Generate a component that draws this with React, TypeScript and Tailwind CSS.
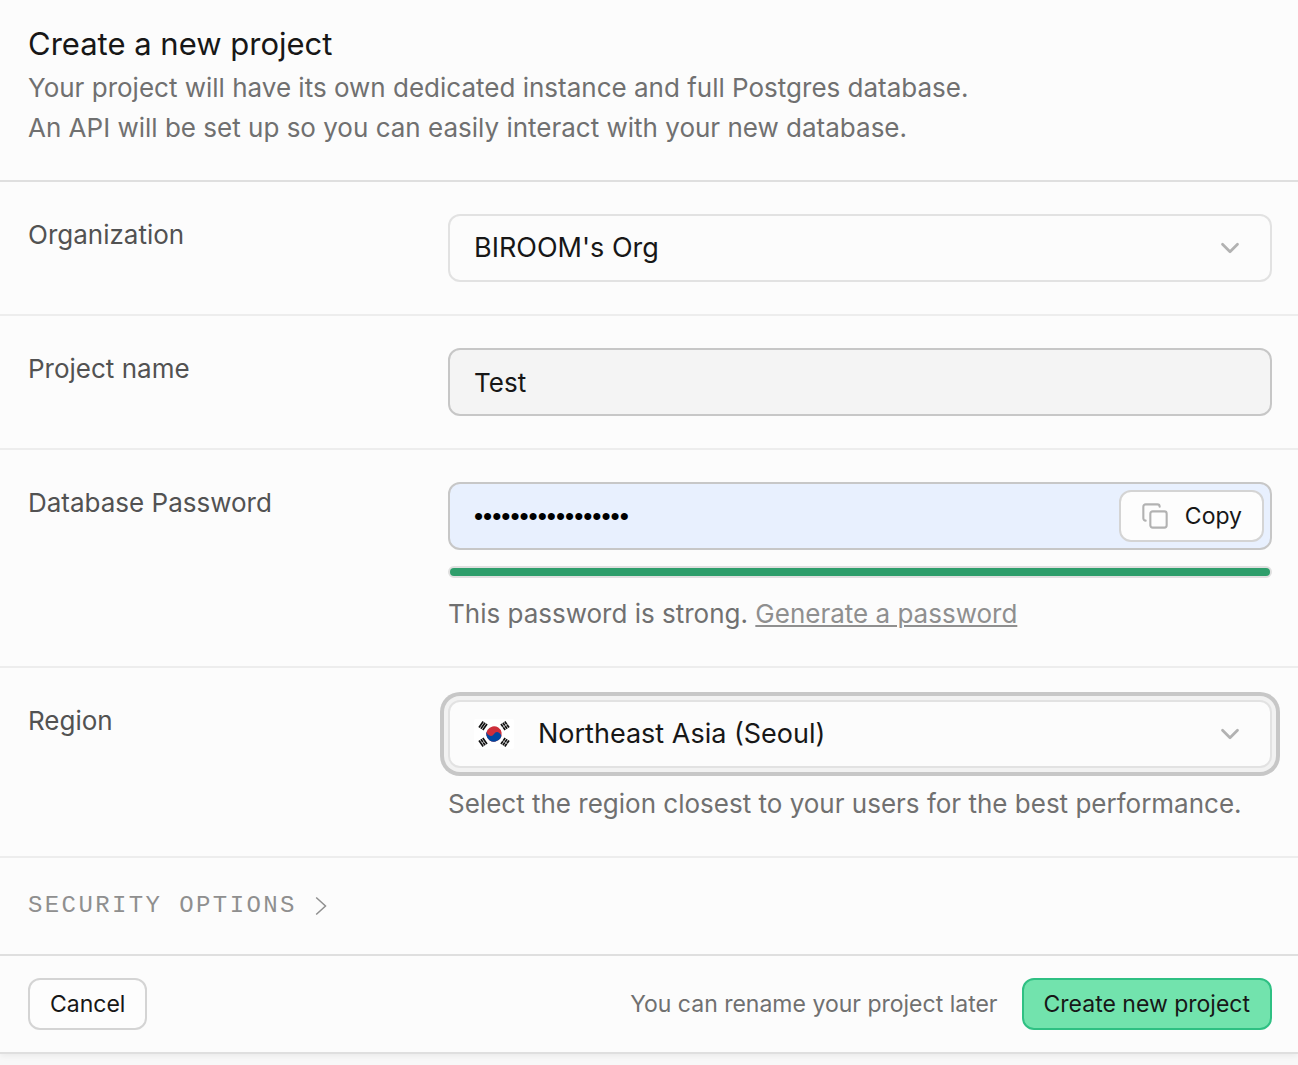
import type { ReactNode } from "react";
import { ChevronDown, Copy } from "lucide-react";

const selectClass =
  "block h-[68px] w-full appearance-none rounded-xl border-2 border-[#e2e2e2] bg-[#fcfcfc] pr-16 text-[27px] text-[#171717] outline-none";

function Row({ label, htmlFor, children }: { label: string; htmlFor: string; children: ReactNode }) {
  return (
    <div className="grid grid-cols-3 gap-4 border-b-2 border-[#ededed] py-8 pr-[26px] pl-7">
      <label htmlFor={htmlFor} className="text-[26px] leading-[42px] text-[#525252]">
        {label}
      </label>
      <div className="col-span-2 flex flex-col gap-4">{children}</div>
    </div>
  );
}

function SelectChevron() {
  return (
    <ChevronDown
      size={30}
      strokeWidth={2.2}
      className="pointer-events-none absolute top-1/2 right-[27px] -translate-y-1/2 text-[#b2b2b2]"
    />
  );
}

function KoreaFlag() {
  return (
    <svg viewBox="0 0 40 30" className="pointer-events-none absolute top-1/2 left-[26px] h-[30px] w-10 -translate-y-1/2">
      <rect width="40" height="30" rx="2" fill="#fff" />
      <g transform="rotate(33.7 20 15)">
        <circle cx="20" cy="15" r="7.7" fill="#cd2e3a" />
        <path d="M12.3 15a3.85 3.85 0 0 0 7.7 0a3.85 3.85 0 0 1 7.7 0a7.7 7.7 0 0 1-15.4 0" fill="#0047a0" />
      </g>
      <g stroke="#111" strokeWidth="1.7">
        {/* geon */}
        <path d="M5 8.4 9.2 2.4M6.9 9.7 11.1 3.7M8.8 11 13 5" />
        {/* gon */}
        <path d="M27 25 31.2 19M28.9 26.3 33.1 20.3M30.8 27.6 35 21.6" />
        {/* gam */}
        <path d="M27 5 31.2 11M28.9 3.7 33.1 9.7M30.8 2.4 35 8.4" />
        {/* ri */}
        <path d="M5 21.6 9.2 27.6M6.9 20.3 11.1 26.3M8.8 19 13 25" />
      </g>
      <g stroke="#fff" strokeWidth="0.6">
        <path d="M28 21.3 34 25.3M28 8.7 34 4.7M8 24 10 22.7" />
      </g>
    </svg>
  );
}

export default function App() {
  return (
    <div className="min-h-screen bg-[#f8f8f8] font-['Inter',sans-serif]">
      <form
        className="border-b-2 border-[#dfdfdf] bg-[#fcfcfc] shadow-[0_2px_6px_rgba(0,0,0,0.06)]"
        onSubmit={(e) => e.preventDefault()}
      >
        <header className="flex flex-col gap-1 border-b-2 border-[#dfdfdf] px-7 pt-6 pb-8">
          <h1 className="text-[31px] leading-[40px] text-[#171717]">Create a new project</h1>
          <p className="text-[26px] leading-[40px] text-[#707070]">
            Your project will have its own dedicated instance and full Postgres database.
            <br />
            An API will be set up so you can easily interact with your new database.
          </p>
        </header>

        <Row label="Organization" htmlFor="organization">
          <div className="relative">
            <select id="organization" className={`${selectClass} pl-6`}>
              <option>BIROOM's Org</option>
            </select>
            <SelectChevron />
          </div>
        </Row>

        <Row label="Project name" htmlFor="project-name">
          <input
            id="project-name"
            type="text"
            defaultValue="Test"
            className="block h-[68px] w-full rounded-xl border-2 border-[#c7c7c7] bg-[#f4f4f4] px-6 text-[26px] text-[#171717] outline-none"
          />
        </Row>

        <Row label="Database Password" htmlFor="db-password">
          <div className="relative">
            <input
              id="db-password"
              type="password"
              defaultValue="abcdefghijklmnopq"
              className="block h-[68px] w-full rounded-xl border-2 border-[#c7c7c7] bg-[#e8f0fe] pr-40 pl-6 font-['Liberation_Sans',sans-serif] text-[26px] text-black outline-none"
            />
            <button
              type="button"
              className="absolute top-2 right-2 flex h-[52px] items-center gap-4 rounded-xl border-2 border-[#d4d4d4] bg-[#fdfdfd] px-5 text-[23px] text-[#171717]"
            >
              <Copy size={28} strokeWidth={1.8} className="text-[#b2b2b2]" />
              Copy
            </button>
          </div>
          <div className="h-3 rounded-full border-2 border-[#dfdfdf] bg-[#dfdfdf]">
            <div className="h-full w-full rounded-full bg-[#2e9e6b]" />
          </div>
          <p className="text-[26px] leading-[40px] text-[#707070]">
            This password is strong.{" "}
            <a href="#generate" className="text-[#8f8f8f] underline">
              Generate a password
            </a>
          </p>
        </Row>

        <Row label="Region" htmlFor="region">
          <div className="relative">
            <select
              id="region"
              className={`${selectClass} pl-[88px] shadow-[0_0_0_4px_#f2f2f2,0_0_0_8px_#c7c7c7]`}
            >
              <option>Northeast Asia (Seoul)</option>
            </select>
            <KoreaFlag />
            <SelectChevron />
          </div>
          <p className="text-[26px] leading-[40px] text-[#707070]">
            Select the region closest to your users for the best performance.
          </p>
        </Row>

        <div className="flex items-center border-b-2 border-[#dfdfdf] px-7 py-[30px]">
          <button
            type="button"
            className="flex items-center gap-[18px] font-['Liberation_Mono',monospace] text-[24px] leading-[36px] tracking-widest text-[#8f8f8f] uppercase"
          >
            Security options
            <svg viewBox="0 0 12 20" className="h-5 w-3" fill="none" stroke="currentColor" strokeWidth="1.5">
              <path d="M1.2 1.5 10.5 10 1.2 18.5" />
            </svg>
          </button>
        </div>

        <footer className="flex items-center justify-between py-[22px] pr-[26px] pl-7">
          <button
            type="button"
            className="h-[52px] rounded-xl border-2 border-[#d4d4d4] bg-[#fdfdfd] px-5 text-[23px] text-[#171717]"
          >
            Cancel
          </button>
          <div className="flex items-center gap-6">
            <span className="text-[23px] text-[#707070]">You can rename your project later</span>
            <button
              type="submit"
              className="h-[52px] rounded-xl border-2 border-[#2fc083] bg-[#72e3ad] px-5 text-[23px] text-[#171717]"
            >
              Create new project
            </button>
          </div>
        </footer>
      </form>
    </div>
  );
}
